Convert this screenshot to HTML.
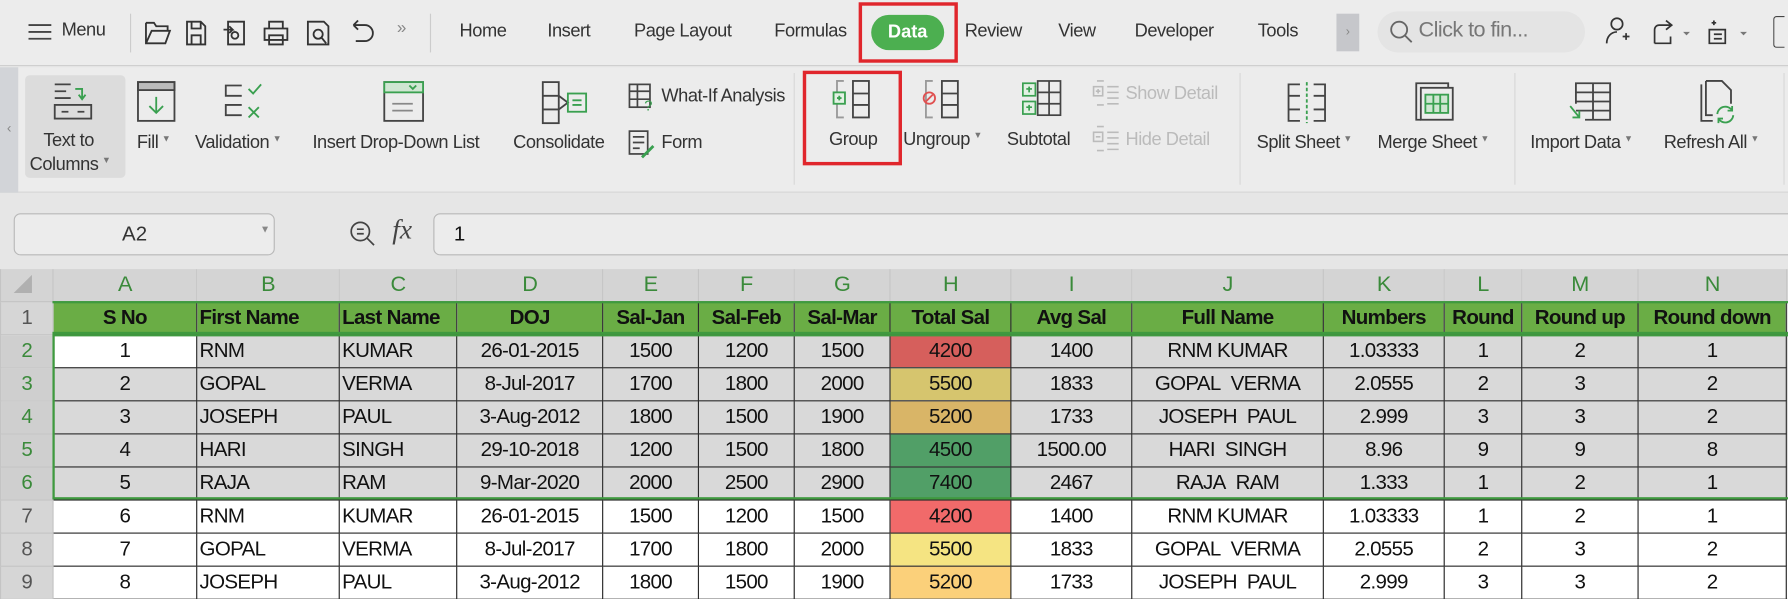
<!DOCTYPE html>
<html><head><meta charset="utf-8"><style>
*{margin:0;padding:0;box-sizing:border-box}
html,body{width:1788px;height:598px;overflow:hidden;background:#e6e6e6}
#w{position:absolute;left:0;top:0;width:1568px;height:524px;transform:scale(1.14031);transform-origin:0 0;font-family:"Liberation Sans Narrow","Liberation Sans",sans-serif;color:#333}
.a{position:absolute;white-space:nowrap}
.t{font-size:16px;color:#333;letter-spacing:-0.4px}
svg{position:absolute;overflow:visible}
.dd{font-size:8px;color:#777;vertical-align:top;margin-left:3px}
table{position:absolute;left:0;top:236px;border-collapse:collapse;table-layout:fixed;width:1576px;font-size:18px;letter-spacing:-0.6px;color:#111}
td{height:29px;border:1px solid #2b2b2b;padding:0 2px;text-align:center;white-space:nowrap;overflow:hidden}
td.l{text-align:left}
tr.h td{background:#d4d4d4;color:#3a8a3a;border:1px solid #c4c4c4;border-top:none;font-size:19px;height:28px}
tr.hd td{background:#6aad45;font-weight:bold;color:#111}
tr.s td{background:#d9d9d9}
tr.w td{background:#fff}
tr td.rh{background:#d6d6d6;color:#555;border:1px solid #c4c4c4;text-align:center;font-weight:normal}
tr.g td.rh{color:#3a8a3a;background:#cfcfcf}
</style></head><body><div id="w">
<div class="a" style="left:0;top:0;width:1568px;height:58px;background:#ececec;border-bottom:1px solid #cfcfcf"></div>
<svg style="left:24px;top:20px" width="22" height="16"><path d="M1 2h20M1 8h20M1 14h20" stroke="#444" stroke-width="1.6"/></svg>
<div class="a t" style="left:54px;top:18px">Menu</div>
<div class="a" style="left:114px;top:12px;width:1px;height:34px;background:#ccc"></div>
<svg style="left:126px;top:16px" width="220" height="26" fill="none" stroke="#333" stroke-width="1.6">
<path d="M2 4h7l2 3h10v4M2 4v18h17l4-11H7L2 22"/>
<path d="M38 3h12l4 4v16H38z M42 3v6h8V3 M42 23v-8h8v8"/>
<path d="M74 3h14v20H74z M70 10h8l-3-3M78 10l-3 3 M80 12a3 3 0 1 1 0 6 3 3 0 0 1 0-6"/>
<path d="M110 3h12v6h-12z M106 9h20v10h-20z M110 15h12v8h-12z"/>
<path d="M144 3h14l4 4v16h-18z M153 10a4 4 0 1 1 0 8 4 4 0 0 1 0-8 M156 17l4 5"/>
<path d="M184 6h10a7 7 0 1 1 0 14h-8M184 6l4-4M184 6l4 4"/>
</svg>
<div class="a" style="left:348px;top:16px;font-size:15px;color:#888">»</div>
<div class="a" style="left:377px;top:12px;width:1px;height:34px;background:#ccc"></div>
<div class="a t" style="left:403px;top:19px">Home</div>
<div class="a t" style="left:480px;top:19px">Insert</div>
<div class="a t" style="left:556px;top:19px">Page Layout</div>
<div class="a t" style="left:679px;top:19px">Formulas</div>
<div class="a" style="left:764px;top:13px;width:64px;height:31px;border-radius:16px;background:#4caf50;color:#fff;font-weight:bold;font-size:16px;text-align:center;line-height:31px">Data</div>
<div class="a" style="left:753px;top:2px;width:87px;height:53px;border:3px solid #e0262c"></div>
<div class="a t" style="left:846px;top:19px">Review</div>
<div class="a t" style="left:928px;top:19px">View</div>
<div class="a t" style="left:995px;top:19px">Developer</div>
<div class="a t" style="left:1103px;top:19px">Tools</div>
<div class="a" style="left:1172px;top:12px;width:20px;height:33px;background:#c6c7cb;color:#888;font-size:11px;text-align:center;line-height:33px">›</div>
<div class="a" style="left:1208px;top:10px;width:182px;height:36px;border-radius:18px;background:#e4e4e4"></div>
<svg style="left:1218px;top:17px" width="22" height="22" fill="none" stroke="#666" stroke-width="1.6"><circle cx="9" cy="9" r="7"/><path d="M14 14l6 6"/></svg>
<div class="a" style="left:1244px;top:16px;font-size:19px;color:#777;letter-spacing:-0.5px">Click to fin...</div>
<svg style="left:1406px;top:14px" width="140" height="28" fill="none" stroke="#333" stroke-width="1.5">
<circle cx="12" cy="7" r="5"/><path d="M3 24c0-6 4-10 9-10M17 18h6M20 15v6"/>
<path d="M45 24V12a4 4 0 0 1 4-4h10M55 4l5 4-5 4M45 24h14v-6"/><path d="M70 14l3 3 3-3" fill="#777" stroke="none"/>
<path d="M95 6h4M97 4v4M93 12h14v12H93zM97 16h7M97 20h7"/><path d="M120 14l3 3 3-3" fill="#777" stroke="none"/>
</svg>
<div class="a" style="left:1555px;top:14px;width:10px;height:28px;border:1.5px solid #444;border-right:none;border-radius:3px 0 0 3px"></div>
<div class="a" style="left:0;top:59px;width:1568px;height:110px;background:#ececec;border-bottom:1px solid #d6d6d6"></div>
<div class="a" style="left:0;top:59px;width:16px;height:110px;background:#d2d4d8;color:#888;font-size:12px;text-align:center;line-height:106px">‹</div>
<div class="a" style="left:22px;top:66px;width:88px;height:90px;background:#dcdcdc;border-radius:4px"></div>
<svg style="left:44px;top:72px" width="40" height="36" fill="none" stroke="#444" stroke-width="1.6">
<path d="M4 2h14M4 8h10M4 14h14"/><path d="M22 6h6v8M25 11l3 4 3-4" stroke="#3aa050"/>
<rect x="4" y="20" width="32" height="12"/><path d="M10 26h6M24 26h6"/></svg>
<div class="a t" style="left:38px;top:115px">Text to</div>
<div class="a t" style="left:26px;top:136px">Columns<span class="dd">▼</span></div>
<svg style="left:120px;top:71px" width="34" height="36" fill="none" stroke="#444" stroke-width="1.6">
<rect x="1" y="1" width="32" height="7" fill="#bbb"/><rect x="1" y="1" width="32" height="34"/><path d="M17 14v14M11 22l6 6 6-6" stroke="#3aa050"/></svg>
<div class="a t" style="left:120px;top:117px">Fill<span class="dd">▼</span></div>
<svg style="left:196px;top:72px" width="40" height="34" fill="none" stroke="#444" stroke-width="1.6">
<path d="M16 3H2v9h14M16 20H2v9h14"/><path d="M22 6l4 4 7-8" stroke="#3aa050"/><path d="M22 22l9 9M31 22l-9 9" stroke="#3aa050"/></svg>
<div class="a t" style="left:171px;top:117px">Validation<span class="dd">▼</span></div>
<svg style="left:336px;top:71px" width="36" height="36" fill="none" stroke="#444" stroke-width="1.6">
<rect x="1" y="1" width="34" height="34"/><rect x="1" y="1" width="34" height="9" fill="#cfe6d2" stroke="#3aa050"/><path d="M23 4l3 3 3-3" stroke="#3aa050"/><path d="M8 20h18M8 26h18" stroke="#888"/></svg>
<div class="a t" style="left:274px;top:117px">Insert Drop-Down List</div>
<svg style="left:474px;top:70px" width="44" height="40" fill="none" stroke="#444" stroke-width="1.6">
<rect x="2" y="2" width="14" height="36"/><path d="M2 14h14M2 26h14M16 14l8 6-8 6" /><rect x="24" y="12" width="16" height="16" stroke="#3aa050"/><path d="M28 18h8M28 22h8" stroke="#3aa050"/></svg>
<div class="a t" style="left:450px;top:117px">Consolidate</div>
<svg style="left:551px;top:73px" width="26" height="24" fill="none" stroke="#444" stroke-width="1.5"><rect x="1" y="1" width="18" height="20"/><path d="M1 7h18M1 14h18M8 1v20"/><text x="14" y="24" font-size="13" fill="#3aa050" stroke="none" font-family="Liberation Sans">?</text></svg>
<div class="a t" style="left:580px;top:76px">What-If Analysis</div>
<svg style="left:551px;top:114px" width="26" height="26" fill="none" stroke="#444" stroke-width="1.5"><rect x="1" y="1" width="16" height="20"/><path d="M4 6h10M4 11h10M4 16h6"/><path d="M12 24l10-10" stroke="#3aa050" stroke-width="2.5"/></svg>
<div class="a t" style="left:580px;top:117px">Form</div>
<div class="a" style="left:696px;top:64px;width:1px;height:98px;background:#d8d8d8"></div>
<svg style="left:730px;top:70px" width="40" height="36" fill="none" stroke="#444" stroke-width="1.6">
<path d="M10 1H4v32h6" stroke="#999"/><rect x="1" y="11" width="10" height="10" stroke="#3aa050" fill="#e3f1e4"/><path d="M4 16h4M6 14v4" stroke="#3aa050"/><rect x="18" y="1" width="14" height="32"/><path d="M18 12h14M18 22h14"/></svg>
<div class="a t" style="left:727px;top:114px">Group</div>
<div class="a" style="left:704px;top:62px;width:87px;height:83px;border:3px solid #e0262c"></div>
<svg style="left:808px;top:70px" width="40" height="36" fill="none" stroke="#444" stroke-width="1.6">
<path d="M10 1H4v32h6" stroke="#999"/><circle cx="7" cy="16" r="5" stroke="#e05050"/><path d="M4 19l6-6" stroke="#e05050"/><rect x="18" y="1" width="14" height="32"/><path d="M18 12h14M18 22h14"/></svg>
<div class="a t" style="left:792px;top:114px">Ungroup<span class="dd">▼</span></div>
<svg style="left:896px;top:69px" width="38" height="36" fill="none" stroke="#444" stroke-width="1.5">
<rect x="1" y="4" width="11" height="11" stroke="#3aa050" fill="#e3f1e4"/><rect x="1" y="20" width="11" height="11" stroke="#3aa050" fill="#e3f1e4"/><path d="M4 9h5M6.5 7v5M4 25h5M6.5 23v5" stroke="#3aa050"/><rect x="14" y="2" width="20" height="30"/><path d="M14 12h20M14 22h20M24 2v30"/></svg>
<div class="a t" style="left:883px;top:114px">Subtotal</div>
<svg style="left:958px;top:70px" width="28" height="24" fill="none" stroke="#bbb" stroke-width="1.4"><rect x="1" y="6" width="8" height="8"/><path d="M3 10h4M5 8v4M4 1h6M4 22h6M13 6h10M13 11h10M13 16h10M13 21h10"/></svg>
<div class="a t" style="left:987px;top:74px;color:#bbb">Show Detail</div>
<svg style="left:958px;top:110px" width="28" height="24" fill="none" stroke="#bbb" stroke-width="1.4"><rect x="1" y="6" width="8" height="8"/><path d="M3 10h4M4 1h6M4 22h6M13 6h10M13 11h10M13 16h10M13 21h10"/></svg>
<div class="a t" style="left:987px;top:114px;color:#bbb">Hide Detail</div>
<div class="a" style="left:1087px;top:64px;width:1px;height:98px;background:#d8d8d8"></div>
<svg style="left:1128px;top:72px" width="36" height="36" fill="none" stroke="#444" stroke-width="1.6"><path d="M12 2H2v32h10M24 2h10v32H24M2 12h10M2 24h10M24 12h10M24 24h10"/><path d="M18 0v36" stroke="#3aa050" stroke-dasharray="3 2"/></svg>
<div class="a t" style="left:1102px;top:117px">Split Sheet<span class="dd">▼</span></div>
<svg style="left:1240px;top:71px" width="38" height="38" fill="none" stroke="#444" stroke-width="1.6"><path d="M6 34H2V2h28v4"/><rect x="6" y="6" width="28" height="28"/><rect x="10" y="12" width="20" height="16" stroke="#3aa050" fill="#cfe6d2"/><path d="M10 20h20M17 12v16M23 12v16" stroke="#3aa050"/></svg>
<div class="a t" style="left:1208px;top:117px">Merge Sheet<span class="dd">▼</span></div>
<div class="a" style="left:1328px;top:64px;width:1px;height:98px;background:#d8d8d8"></div>
<svg style="left:1374px;top:71px" width="40" height="36" fill="none" stroke="#444" stroke-width="1.6"><path d="M8 20V2h30v32H16M23 2v32M8 10h30M8 18h30M8 26h30" /><path d="M3 22l8 10M11 26v6H5" stroke="#3aa050"/></svg>
<div class="a t" style="left:1342px;top:117px">Import Data<span class="dd">▼</span></div>
<svg style="left:1486px;top:70px" width="40" height="40" fill="none" stroke="#444" stroke-width="1.6"><path d="M6 4v32h10M10 1h14l8 8v12M10 1v30h6"/><path d="M20 30a7 7 0 0 1 13-3M34 31a7 7 0 0 1-13 3M33 23v4h-4M21 38v-4h4" stroke="#3aa050"/></svg>
<div class="a t" style="left:1459px;top:117px">Refresh All<span class="dd">▼</span></div>
<div class="a" style="left:1564px;top:64px;width:1px;height:98px;background:#d8d8d8"></div>
<div class="a" style="left:12px;top:187px;width:229px;height:37px;border:1px solid #b8b8b8;border-radius:6px;background:#ececec"></div>
<div class="a" style="left:107px;top:195px;font-size:18px;color:#333">A2</div>
<div class="a" style="left:228px;top:196px;font-size:9px;color:#888">▼</div>
<svg style="left:306px;top:193px" width="26" height="26" fill="none" stroke="#444" stroke-width="1.5"><circle cx="10" cy="10" r="8"/><path d="M16 16l6 6M7 8h6M7 12h6"/></svg>
<div class="a" style="left:344px;top:189px;font-size:24px;font-style:italic;font-family:'Liberation Serif',serif;color:#444">fx</div>
<div class="a" style="left:380px;top:187px;width:1200px;height:37px;border:1px solid #b8b8b8;border-radius:6px 0 0 6px;background:#ececec"></div>
<div class="a" style="left:398px;top:195px;font-size:18px;color:#111">1</div>
<table>
<colgroup><col style="width:46px"><col style="width:126px"><col style="width:125px"><col style="width:103px"><col style="width:128px"><col style="width:84px"><col style="width:84px"><col style="width:84px"><col style="width:106px"><col style="width:106px"><col style="width:168px"><col style="width:106px"><col style="width:68px"><col style="width:102px"><col style="width:130px"><col style="width:10px"></colgroup>
<tr class="h"><td style="background:#d4d4d4"><svg style="position:relative;left:-4px;top:2px" width="16" height="16"><path d="M16 0V16H0z" fill="#b0b0b0"/></svg></td><td>A</td><td>B</td><td>C</td><td>D</td><td>E</td><td>F</td><td>G</td><td>H</td><td>I</td><td>J</td><td>K</td><td>L</td><td>M</td><td>N</td><td></td></tr>
<tr class="hd"><td class="rh">1</td><td>S No</td><td class="l">First Name</td><td class="l">Last Name</td><td>DOJ</td><td>Sal-Jan</td><td>Sal-Feb</td><td>Sal-Mar</td><td>Total Sal</td><td>Avg Sal</td><td>Full Name</td><td>Numbers</td><td>Round</td><td>Round up</td><td>Round down</td><td style="background:#ddd;border:none"></td></tr>
<tr class="s g"><td class="rh">2</td><td style="background:#fff">1</td><td class="l">RNM</td><td class="l">KUMAR</td><td>26-01-2015</td><td>1500</td><td>1200</td><td>1500</td><td style="background:#d65f5c">4200</td><td>1400</td><td>RNM KUMAR</td><td>1.03333</td><td>1</td><td>2</td><td>1</td><td style="border:none"></td></tr>
<tr class="s g"><td class="rh">3</td><td>2</td><td class="l">GOPAL</td><td class="l">VERMA</td><td>8-Jul-2017</td><td>1700</td><td>1800</td><td>2000</td><td style="background:#d6c56e">5500</td><td>1833</td><td>GOPAL&nbsp; VERMA</td><td>2.0555</td><td>2</td><td>3</td><td>2</td><td style="border:none"></td></tr>
<tr class="s g"><td class="rh">4</td><td>3</td><td class="l">JOSEPH</td><td class="l">PAUL</td><td>3-Aug-2012</td><td>1800</td><td>1500</td><td>1900</td><td style="background:#d9b567">5200</td><td>1733</td><td>JOSEPH&nbsp; PAUL</td><td>2.999</td><td>3</td><td>3</td><td>2</td><td style="border:none"></td></tr>
<tr class="s g"><td class="rh">5</td><td>4</td><td class="l">HARI</td><td class="l">SINGH</td><td>29-10-2018</td><td>1200</td><td>1500</td><td>1800</td><td style="background:#519f67">4500</td><td>1500.00</td><td>HARI&nbsp; SINGH</td><td>8.96</td><td>9</td><td>9</td><td>8</td><td style="border:none"></td></tr>
<tr class="s g"><td class="rh">6</td><td>5</td><td class="l">RAJA</td><td class="l">RAM</td><td>9-Mar-2020</td><td>2000</td><td>2500</td><td>2900</td><td style="background:#519f67">7400</td><td>2467</td><td>RAJA&nbsp; RAM</td><td>1.333</td><td>1</td><td>2</td><td>1</td><td style="border:none"></td></tr>
<tr class="w"><td class="rh">7</td><td>6</td><td class="l">RNM</td><td class="l">KUMAR</td><td>26-01-2015</td><td>1500</td><td>1200</td><td>1500</td><td style="background:#f16a6a">4200</td><td>1400</td><td>RNM KUMAR</td><td>1.03333</td><td>1</td><td>2</td><td>1</td><td style="border:none"></td></tr>
<tr class="w"><td class="rh">8</td><td>7</td><td class="l">GOPAL</td><td class="l">VERMA</td><td>8-Jul-2017</td><td>1700</td><td>1800</td><td>2000</td><td style="background:#f5e482">5500</td><td>1833</td><td>GOPAL&nbsp; VERMA</td><td>2.0555</td><td>2</td><td>3</td><td>2</td><td style="border:none"></td></tr>
<tr class="w"><td class="rh">9</td><td>8</td><td class="l">JOSEPH</td><td class="l">PAUL</td><td>3-Aug-2012</td><td>1800</td><td>1500</td><td>1900</td><td style="background:#fbd07a">5200</td><td>1733</td><td>JOSEPH&nbsp; PAUL</td><td>2.999</td><td>3</td><td>3</td><td>2</td><td style="border:none"></td></tr>
</table>
<div class="a" style="left:46px;top:293px;width:1530px;height:145px;border:2px solid #3f9a3f;border-right:none"></div>
<div class="a" style="left:46px;top:264px;width:1522px;height:29px;border-top:2px solid #3f9a3f;border-bottom:2px solid #3f9a3f"></div>
</div></body></html>
